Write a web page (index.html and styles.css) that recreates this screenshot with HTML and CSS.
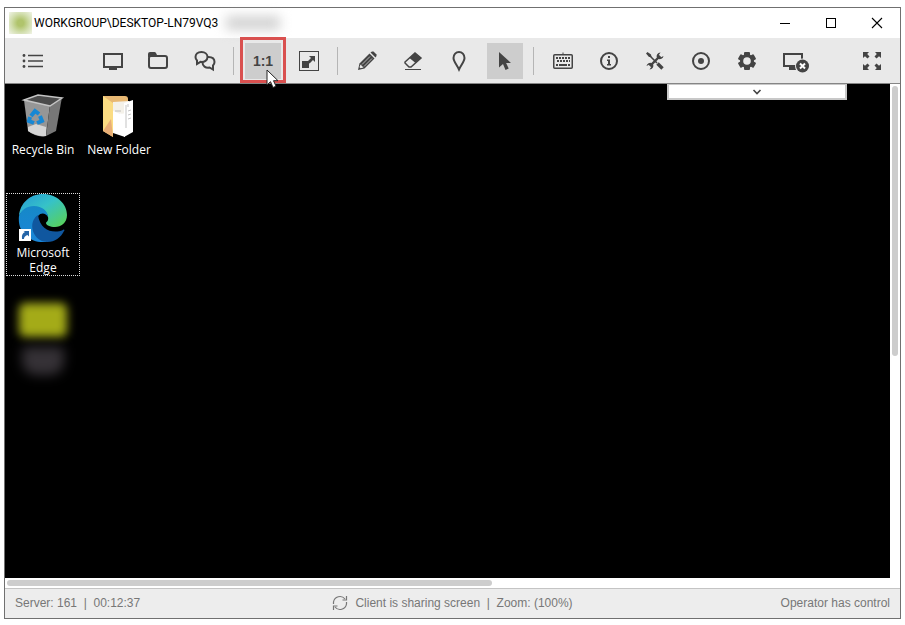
FILE: index.html
```html
<!DOCTYPE html>
<html lang="en">
<head>
    <meta charset="UTF-8">
    <title>WORKGROUP\DESKTOP-LN79VQ3</title>
    <link rel="stylesheet" href="styles.css">
</head>
<body>
    <div class="window">
        <header class="titlebar">
            <span class="app-icon"></span>
            <span class="title">WORKGROUP\DESKTOP-LN79VQ3</span>
            <span class="hidden-name"></span>
            <div class="window-buttons">
                <button aria-label="Minimize"><svg width="12" height="12" viewBox="0 0 12 12"><path d="M1 6.5h10" stroke="#000" fill="none"/></svg></button>
                <button aria-label="Maximize"><svg width="12" height="12" viewBox="0 0 12 12"><rect x="1.5" y="1.5" width="9" height="9" stroke="#000" fill="none"/></svg></button>
                <button aria-label="Close"><svg width="12" height="12" viewBox="0 0 12 12"><path d="M1 1l10 10M11 1L1 11" stroke="#000" stroke-width="1.1" fill="none"/></svg></button>
            </div>
        </header>

        <nav class="toolbar">
            <button class="tool menu" aria-label="Menu">
                <svg width="24" height="24" viewBox="0 0 24 24"><path d="M7 6.500h15M7 12h15M7 17.500h15" stroke="#444" stroke-width="1.600"/><circle cx="3" cy="6.500" r="1.400"/><circle cx="3" cy="12" r="1.400"/><circle cx="3" cy="17.500" r="1.400"/></svg>
            </button>
            <button class="tool" aria-label="Monitor">
                <svg width="24" height="24" viewBox="0 0 24 24"><rect x="3" y="5" width="18" height="13" class="line"/><path d="M8 18h8v3H8z"/></svg>
            </button>
            <button class="tool" aria-label="Files">
                <svg width="24" height="24" viewBox="0 0 24 24"><rect x="2" y="7" width="18" height="12" rx="2" class="line"/><path d="M1 8V5q0-2 2-2h4.500q1 0 1.500 1l1 2v2z"/></svg>
            </button>
            <button class="tool" aria-label="Chat">
                <svg width="24" height="24" viewBox="0 0 24 24"><path d="M15.500 8c4 0 6 2 6 5 0 1.500-.5 2.500-1.500 3.500v4L16.500 18.500c-4 .7-7-1.500-7-5C9.500 10 12 8 15.500 8z" class="line"/><path d="M8.500 3C4.500 3 2.500 5.500 2.500 8c0 1.500.6 2.600 1.500 3.500V15l3.500-2.200c4 .6 7-1.600 7-4.800 0-2.800-2.500-5-6-5z" class="line"/></svg>
            </button>
            <span class="sep"></span>
            <div class="highlight">
                <button class="tool active ratio">1:1</button>
                <svg class="pointer" width="14" height="20" viewBox="0 0 14 20"><path d="M1 1v15l3.500-3.300L7 18.500l3-1.300-2.500-5.500H12z" fill="#fff" stroke="#222"/></svg>
            </div>
            <button class="tool" aria-label="Fit to window">
                <svg width="24" height="24" viewBox="0 0 24 24"><rect x="2.500" y="2.500" width="19" height="19" fill="none" stroke="#444"/><path d="M5 12h7v7H5zM12 7h6v6l-2-2-3.500 3.500-2-2L14 9z"/></svg>
            </button>
            <span class="sep"></span>
            <button class="tool" aria-label="Pencil">
                <svg width="24" height="24" viewBox="0 0 24 24"><path d="M3 21l1.500-6.500L14.500 4.500l5 5L9.500 19.500z"/><path d="M15.500 3.500L17 2.500h1.500l3 3V7l-1 1.500z"/><path d="M7 15.500l8-8M9 17.500l8-8" stroke="#e9e9e9" stroke-width=".7"/><path d="M5.500 15.500l3 3-3 .8-1-1z" fill="#e9e9e9"/></svg>
            </button>
            <button class="tool" aria-label="Eraser">
                <svg width="24" height="24" viewBox="0 0 24 24"><path d="M4 13L14 4l6 5-10 9H8l-4-4z" fill="#e9e9e9" stroke="#444" stroke-width="1.500"/><path d="M8.500 9L14 4l6 5-5.500 5z"/><path d="M4 20.500h16" stroke="#444"/></svg>
            </button>
            <button class="tool" aria-label="Marker">
                <svg width="24" height="24" viewBox="0 0 24 24"><path d="M12 20.500C10 16 6.500 12.500 6.500 9c0-3.500 2.500-6 5.500-6s5.500 2.500 5.500 6c0 3.500-3.500 7-5.500 11.500z" class="line"/></svg>
            </button>
            <button class="tool active" aria-label="Pointer">
                <svg width="24" height="24" viewBox="0 0 24 24"><path d="M6 3v15.500l4-3.500 2.500 6 3.200-1.400-2.600-5.600H18z"/></svg>
            </button>
            <span class="sep"></span>
            <button class="tool" aria-label="Keyboard">
                <svg width="24" height="24" viewBox="0 0 24 24"><rect x="2.750" y="5.750" width="18.500" height="13.500" rx="1" fill="none" stroke="#444" stroke-width="1.500"/><path d="M12 6V3.500" stroke="#444"/><path d="M5 9h14M6 12h13" stroke="#444" stroke-width="2" stroke-dasharray="2 1"/><path d="M5 16h2M8 16h8M17 16h2" stroke="#444" stroke-width="2"/></svg>
            </button>
            <button class="tool" aria-label="Information">
                <svg width="24" height="24" viewBox="0 0 24 24"><circle cx="12" cy="12" r="8" class="line"/><path d="M11 7h2v2h-2zM10 10.500h3V15h1v1.500h-4V15h1v-3h-1z"/></svg>
            </button>
            <button class="tool" aria-label="Tools">
                <svg width="24" height="24" viewBox="0 0 24 24"><path d="M5 5l9 9" stroke="#444" stroke-width="1.600"/><path d="M14.500 14.500l5 5" stroke="#444" stroke-width="3.400"/><path d="M7 17L17 7" stroke="#444" stroke-width="2.400"/><path d="M20.500 7a3.800 3.800 0 0 1-5.500 2.800L14 9A3.800 3.800 0 0 1 17.500 3.500L15.800 6l2.200 2.200zM3.500 17A3.800 3.800 0 0 1 9 14.200l1 .8a3.800 3.800 0 0 1-3.500 5.500L8.200 18 6 15.800z"/><path d="M3 4.500L4.500 3 8 5.500 8.500 8 6 8z"/></svg>
            </button>
            <button class="tool" aria-label="Record">
                <svg width="24" height="24" viewBox="0 0 24 24"><circle cx="12" cy="12" r="8" class="line"/><circle cx="12" cy="12" r="3"/></svg>
            </button>
            <button class="tool" aria-label="Settings">
                <svg width="24" height="24" viewBox="0 0 24 24"><rect x="9" y="3" width="6" height="18" rx="1"/><rect x="9" y="3" width="6" height="18" rx="1" transform="rotate(60 12 12)"/><rect x="9" y="3" width="6" height="18" rx="1" transform="rotate(120 12 12)"/><circle cx="12" cy="12" r="7"/><circle cx="12" cy="12" r="3.800" fill="#e9e9e9"/></svg>
            </button>
            <button class="tool end-session" aria-label="Disconnect">
                <svg width="28" height="24" viewBox="0 0 28 24"><rect x="3" y="5" width="18" height="12" class="line"/><path d="M8 17h7v4H8z"/><circle cx="21.500" cy="17" r="7.500" fill="#e9e9e9"/><circle cx="21.500" cy="17" r="6.500"/><path d="M19 14.500l5 5M24 14.500l-5 5" stroke="#fff" stroke-width="2"/></svg>
            </button>
            <button class="tool fullscreen" aria-label="Full screen">
                <svg width="24" height="24" viewBox="0 0 24 24"><path d="M3 3h6L7.200 5 9.500 7.500l-2 2L5 7.200 3 9zM21 3h-6l1.800 2-2.300 2.500 2 2L19 7.200 21 9zM3 21h6l-1.800-2 2.300-2.500-2-2L5 16.800 3 15zM21 21h-6l1.800-2-2.300-2.500 2-2 2.500 2.300L21 15z"/></svg>
            </button>
        </nav>

        <main class="viewport">
            <div class="desktop">
                <button class="shortcut">
                    <svg width="48" height="48" viewBox="0 0 48 48"><path d="M5 9L31 14 27 45Q18 47 9 40z" fill="#969696"/><path d="M31 14L43 6 37 40 27 45z" fill="#777"/><path d="M5 9L19 4l24 3-12 8z" fill="#4b4b4b" stroke="#c4c4c4" stroke-width="1.500"/><path d="M9 36l8-3 10 3v9q-9 1-18-5z" fill="#d5d5d5"/><g fill="none" stroke="#1687d4" stroke-width="4"><path d="M12 25l4-5 4 3"/><path d="M21 25l2 5-5 2"/><path d="M15 32l-5-2 1-4"/></g></svg>
                    <span>Recycle Bin</span>
                </button>
                <button class="shortcut">
                    <svg width="48" height="48" viewBox="0 0 48 48"><path d="M8 5h22q3 0 3 3v32H8z" fill="#e8b873"/><path d="M18 11l16-1v32l-16-1z" fill="#f4f1e9"/><path d="M29 12l9-3v32l-9 5z" fill="#fff"/><path d="M31 14v23M33 13v3M33 20l3-1M33 24l3-1M33 28l3-1M20 20h6M20 23h5" stroke="#aaa" stroke-width=".7"/><path d="M8 5l10 7v34L8 40z" fill="#fbdc82"/><path d="M8 40l8-12 2 18z" fill="#e9ae76"/><path d="M18 20q8 4 12 2v24L18 42z" fill="#fff"/></svg>
                    <span>New Folder</span>
                </button>
                <button class="shortcut selected">
                    <svg width="50" height="48" viewBox="0 0 50 48">
                        <defs>
                            <linearGradient id="edgeTop" x1="0" y1="0" x2="1" y2="1"><stop offset="0" stop-color="#2599d6"/><stop offset=".45" stop-color="#36c2c8"/><stop offset="1" stop-color="#5dd34c"/></linearGradient>
                            <linearGradient id="edgeLeft" x1="0" y1="0" x2="0" y2="1"><stop offset="0" stop-color="#1688c8"/><stop offset="1" stop-color="#1a86d8"/></linearGradient>
                        </defs>
                        <path d="M1 22C2 9 12 0 25 0c14 0 24 10 24 21 0 8-6 12-12 12-5 0-9-2-9-4 0-1 3-2 2-6-1-6-7-10-14-10C9 13 3 17 1 22z" fill="url(#edgeTop)"/>
                        <path d="M1 22c2-6 8-10 15-10 8 0 14 5 14 11-2-4-7-5-10-1-6 8 0 22 10 26C13 50-1 39 1 22z" fill="url(#edgeLeft)"/>
                        <path d="M20 21c-8 5-8 19 2 25 9 5 20 0 24-9 1-1 0-2-1-1-9 4-23 1-25-15z" fill="#10579f"/>
                        <rect x="1" y="35" width="12" height="12" fill="#fff"/><path d="M4 45c-.5-4 .5-6 3-7L5.500 37H11v5.500L9.500 41C7 42 6 43 6 45z" fill="#2464a7"/>
                    </svg>
                    <span>Microsoft Edge</span>
                </button>
                <div class="blurred-shortcut"><i class="blob"></i><i class="caption"></i></div>
            </div>
            <button class="pulldown" aria-label="Show panel">
                <svg width="10" height="8" viewBox="0 0 10 8"><path d="M1.500 2L5 5.500 8.500 2" fill="none" stroke="#444" stroke-width="1.600"/></svg>
            </button>
            <div class="vscroll"><div class="thumb"></div></div>
            <div class="hscroll"><div class="thumb"></div></div>
        </main>

        <footer class="statusbar">
            <span>Server: 161&nbsp; |&nbsp; 00:12:37</span>
            <span class="center">
                <svg width="16" height="16" viewBox="0 0 16 16"><path d="M1.500 9V7A6.500 6.500 0 0 1 13 4M14.500 7v2A6.500 6.500 0 0 1 3 12M14.500 1v4h-4M1.500 15v-4h4" fill="none" stroke="#777" stroke-width="1.200"/></svg>
                Client is sharing screen&nbsp; |&nbsp; Zoom: (100%)
            </span>
            <span class="right">Operator has control</span>
        </footer>
    </div>
</body>
</html>
```
FILE: styles.css
```css
* { box-sizing: border-box; }
body {
    margin: 0;
    padding: 7px 4px 6px;
    height: 100vh;
    background: #fff;
    font-family: "Liberation Sans", Arial, sans-serif;
    font-size: 12px;
}
button {
    border: 0;
    padding: 0;
    background: none;
    font: inherit;
    color: inherit;
}
.window {
    display: flex;
    flex-direction: column;
    height: 100%;
    border: 1px solid #707070;
}

/* title bar */
.titlebar {
    display: flex;
    align-items: center;
    height: 30px;
    padding-left: 4px;
}
.app-icon {
    width: 23px;
    height: 22px;
    background: radial-gradient(circle, #b0c46c 20%, #d3dfb0 60%, #edf1e0 95%);
}
.title {
    margin-left: 2px;
    font-family: Roboto, "Segoe UI", sans-serif;
    color: #000;
}
.hidden-name {
    width: 54px;
    height: 14px;
    margin-left: 8px;
    background: #d2d2d2;
    filter: blur(6px);
}
.window-buttons {
    display: flex;
    margin-left: auto;
}
.window-buttons button {
    width: 46px;
    height: 30px;
}
.window-buttons svg { display: block; margin: 0 auto; }

/* toolbar */
.toolbar {
    display: flex;
    gap: 10px;
    height: 46px;
    padding: 5px 10px;
    background: #e9e9e9;
    border-bottom: 1px solid #858585;
}
.tool {
    display: flex;
    align-items: center;
    justify-content: center;
    flex: none;
    width: 36px;
    height: 36px;
    color: #444;
}
.tool svg { fill: #444; }
.tool .line {
    fill: #e9e9e9;
    stroke: #444;
    stroke-width: 2;
}
.menu { margin-right: 34px; }
.active { background: #cdcdcd; }
.ratio {
    font-size: 14px;
    font-weight: bold;
}
.sep {
    width: 1px;
    height: 28px;
    margin: 4px 1px 0 0;
    background: #b5b5b5;
}
.highlight { position: relative; }
.highlight::after {
    content: "";
    position: absolute;
    inset: -6px -5px -5px;
    border: 3px solid #d9504f;
}
.pointer {
    position: absolute;
    z-index: 1;
    left: 21px;
    top: 26px;
}
.end-session svg { flex: none; margin-left: 4px; }
.fullscreen { margin-left: auto; }

/* remote screen */
.viewport {
    position: relative;
    flex: 1;
    display: grid;
    grid-template-columns: 1fr 10px;
    grid-template-rows: 1fr 10px;
    min-height: 0;
}
.desktop {
    display: grid;
    grid-template-columns: 74px 74px;
    grid-auto-rows: 83px;
    gap: 20px 2px;
    padding: 6px 1px;
    background: #000;
}
.shortcut {
    display: flex;
    flex-direction: column;
    align-items: center;
    border: 1px solid transparent;
    font-family: "Open Sans", "Segoe UI", sans-serif;
    line-height: 15px;
    color: #fff;
}
.shortcut svg { flex: none; }
.shortcut span { margin-top: 3px; }
.selected {
    grid-column: 1;
    border: 1px dotted #ddd;
}
.blurred-shortcut {
    grid-column: 1;
    display: flex;
    flex-direction: column;
    align-items: center;
    gap: 10px;
    padding-top: 7px;
}
.blob {
    width: 48px;
    height: 34px;
    border-radius: 6px;
    background: #a4ab18;
    filter: blur(5px);
}
.caption {
    width: 42px;
    height: 28px;
    border-radius: 4px 4px 14px 14px;
    background: #353136;
    filter: blur(6px);
}
.pulldown {
    position: absolute;
    top: 0;
    right: 53px;
    width: 180px;
    height: 16px;
    background: #fff;
    border: 2px solid #c8c8c8;
    border-top-width: 1px;
}
.pulldown svg { display: block; margin: 0 auto; }
.vscroll { padding: 2px; }
.vscroll .thumb {
    width: 6px;
    height: 55%;
    border-radius: 3px;
    background: #cdcdcd;
}
.hscroll {
    grid-column: 1;
    padding: 2px;
}
.hscroll .thumb {
    width: 55%;
    height: 6px;
    border-radius: 3px;
    background: #cdcdcd;
}

/* status bar */
.statusbar {
    display: grid;
    grid-template-columns: 1fr auto 1fr;
    align-items: center;
    height: 30px;
    padding: 0 10px 2px;
    background: #ededed;
    border-top: 1px solid #c4c4c4;
    color: #777;
}
.center {
    display: flex;
    align-items: center;
    gap: 7px;
}
.right { text-align: right; }
```
